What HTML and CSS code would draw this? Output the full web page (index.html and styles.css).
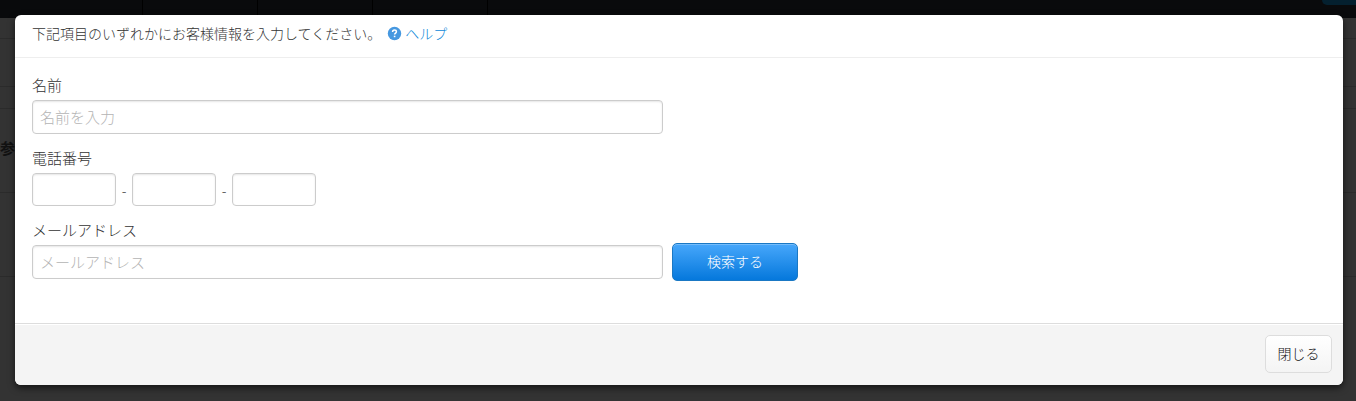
FILE: index.html
```html
<!DOCTYPE html>
<html lang="ja">
<head>
  <meta charset="UTF-8">
  <title>お客様情報の検索</title>
  <link rel="stylesheet" href="styles.css">
</head>

<body>
  <!-- Page behind the dialog -->
  <div class="page">
    <div class="topbar">
      <div class="topbar-nav"><span></span><span></span><span></span><span></span></div>
      <div class="topbar-action"></div>
    </div>
    <div class="page-row row-title"></div>
    <div class="page-row row-tabs"></div>
    <div class="page-row row-gap"></div>
    <div class="page-row row-item">参</div>
    <div class="page-row row-item"></div>
  </div>

  <!-- Customer search dialog -->
  <div class="modal" role="dialog" aria-modal="true">
    <div class="modal-header">
      <span>下記項目のいずれかにお客様情報を入力してください。</span>
      <a class="help" href="#">
        <svg width="15" height="15" viewBox="0 0 15 15" aria-hidden="true">
          <circle cx="7.5" cy="7.5" r="6.7" fill="#4698e0"/>
          <path d="M5.6 6c0-1.2.8-1.9 1.9-1.9S9.4 4.8 9.4 5.8c0 1.2-1.8 1.3-1.8 2.7" fill="none" stroke="#fff" stroke-width="1.5"/>
          <rect x="6.8" y="9.7" width="1.6" height="1.5" fill="#fff"/>
        </svg>
        ヘルプ
      </a>
    </div>

    <form class="modal-body" id="search-form">
      <div class="field">
        <label for="name">名前</label>
        <input class="wide" type="text" id="name" placeholder="名前を入力">
      </div>
      <div class="field">
        <label for="tel1">電話番号</label>
        <div class="tel">
          <input type="text" id="tel1">
          <span>-</span>
          <input type="text" aria-label="電話番号2">
          <span>-</span>
          <input type="text" aria-label="電話番号3">
        </div>
      </div>
      <div class="field">
        <label for="email">メールアドレス</label>
        <div class="search-row">
          <input class="wide" type="text" id="email" placeholder="メールアドレス">
          <button class="btn btn-primary" type="button">検索する</button>
        </div>
      </div>
    </form>

    <div class="modal-footer">
      <button class="btn btn-close" type="button">閉じる</button>
    </div>
  </div>
</body>
</html>
```

FILE: styles.css
```css
* {
  box-sizing: border-box;
}
body {
  margin: 0;
  min-height: 100vh;
  background-color: #333;
  color: #333;
  font-family: "Noto Sans CJK JP", sans-serif;
  font-size: 14px;
  font-weight: 300;
  overflow: hidden;
}

/* page behind */
.topbar {
  display: flex;
  justify-content: space-between;
  height: 18px;
  background-color: #090a0c;
}
.topbar-nav {
  display: flex;
  padding-left: 28px;
}
.topbar-nav span {
  width: 115px;
  border-right: 1px solid #000;
}
.topbar-action {
  width: 34px;
  height: 5px;
  background-color: #04202f;
  border-bottom-left-radius: 5px;
}
.page-row {
  border-bottom: 1px solid #2b2b2b;
}
.row-title {
  height: 21px;
}
.row-tabs {
  height: 48px;
}
.row-gap {
  height: 22px;
}
.row-item {
  height: 84px;
  line-height: 78px;
  font-size: 15px;
  font-weight: bold;
  color: #111;
}

/* dialog */
.modal {
  position: absolute;
  top: 15px;
  left: 15px;
  right: 13px;
  background-color: #fff;
  border-radius: 6px;
  box-shadow: 0 3px 7px rgba(0,0,0,0.6);
  overflow: hidden;
}
.modal-header {
  display: flex;
  align-items: center;
  gap: 6px;
  padding: 7px 17px 13px;
  line-height: 22px;
  border-bottom: 1px solid #eee;
}
.help {
  display: flex;
  align-items: center;
  gap: 3px;
  color: #0d88d8;
  text-decoration: none;
}
.modal-body {
  display: flex;
  flex-direction: column;
  gap: 13px;
  padding: 16px 17px 44px;
}
label {
  display: block;
  margin-bottom: 4px;
  font-size: 15px;
  line-height: 22px;
}
input {
  height: 34px;
  padding: 0 7px 2px;
  border: 1px solid #ccc;
  border-radius: 4px;
  box-shadow: inset 0 1px 2px rgba(0,0,0,0.1);
  background-color: #fff;
  font: inherit;
  font-size: 15px;
}
input::placeholder {
  color: #b4b4b4;
}
.wide {
  display: block;
  width: 631px;
  max-width: 100%;
}
.tel {
  display: flex;
  align-items: center;
}
.tel input {
  width: 84px;
  height: 33px;
}
.tel span {
  width: 16px;
  text-align: center;
}
.search-row {
  display: flex;
  align-items: center;
  gap: 9px;
}
.btn {
  height: 38px;
  padding: 0 11px 2px;
  border-radius: 5px;
  font: inherit;
  cursor: pointer;
}
.btn-primary {
  flex: none;
  width: 126px;
  margin: -2px 0;
  border: 1px solid #1a78c4;
  background: linear-gradient(#47a7fb, #0578dc);
  box-shadow: inset 0 1px 0 rgba(255,255,255,0.25);
  color: #fff;
}
.btn-close {
  min-width: 67px;
  border: 1px solid #ddd;
  background: linear-gradient(#fff, #f4f4f4);
  color: #111;
}
.modal-footer {
  display: flex;
  justify-content: flex-end;
  padding: 11px 11px 12px;
  background-color: #f4f4f4;
  border-top: 1px solid #ddd;
  box-shadow: inset 0 1px 0 #fff;
}
```
